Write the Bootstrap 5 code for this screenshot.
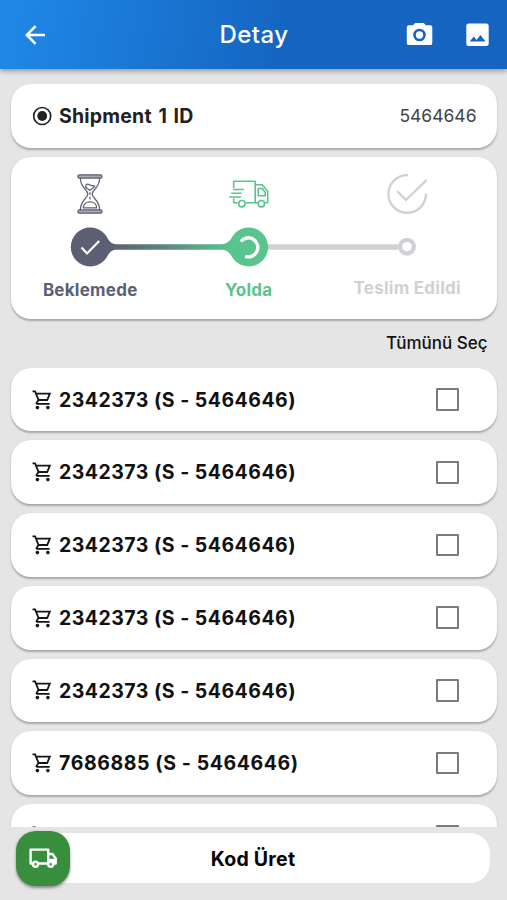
<!DOCTYPE html>
<html lang="tr">
<head>
<meta charset="utf-8">
<meta name="viewport" content="width=device-width, initial-scale=1">
<title>Detay</title>
<link href="https://cdn.jsdelivr.net/npm/bootstrap@5.3.0/dist/css/bootstrap.min.css" rel="stylesheet">
<style>
body{font-family:Inter,"Liberation Sans",sans-serif;background:#e5e5e5;height:900px;overflow:hidden;color:#111}
svg{display:block;flex:none}
.topbar{height:69px;background:linear-gradient(100deg,#2089e8 0%,#1566c2 55%,#1565c0 100%);box-shadow:0 2px 5px rgba(0,0,0,.36);z-index:2;padding:1px 17px 0 22px}
.page-title{font-size:24px;font-weight:500;letter-spacing:.4px;line-height:30px}
.side{width:84px}
.side-start{width:80px}
.content{padding:15.3px 10.5px 0 11px;min-height:0}
.tile{background:#fff;border-radius:20px;box-shadow:0 1.5px 2px rgba(0,0,0,.27);height:63.7px;flex:none;padding:0 20px 0 20px}
.ship-name{font-size:19.5px;font-weight:700;letter-spacing:.2px;word-spacing:1.8px;color:#222;margin-left:6px}
.ship-id{font-size:17.5px;letter-spacing:0;color:#444}
.steps{height:162px;padding:17px 10px 0 0;margin-top:8.800px}
.step-icon{height:40px}
.rail{margin-top:13px}
.step-label{font-size:17px;font-weight:700;letter-spacing:.25px;line-height:24px;padding-top:11px}
.tone-done{color:#5c5f73}.tone-now{color:#59c48d}.tone-next{color:#d0d1d4}
.select-all{font-size:17px;font-weight:500;line-height:24px;margin:12px 9px 13px 0}
.orders{gap:9px}
.order-no{font-size:19.5px;font-weight:700;letter-spacing:.48px;margin-left:6px;padding-top:1.500px}
.order-wide{letter-spacing:.59px}
.tickbox{width:22.5px;height:22.5px;border:2.3px solid #7b7b7b;border-radius:1px;margin-right:18px}
.bottom{height:73px;padding:6px 17px 17px 16px}
.code-btn,.code-btn:hover{background:#fff;border:0;border-radius:20px;font-size:19.5px;font-weight:700;color:#050505;letter-spacing:.25px}
.fab{width:54.5px;height:54.5px;left:15.5px;top:4px;border:0;border-radius:20px;background:#388e3c;box-shadow:0 1.5px 3px rgba(0,0,0,.4)}
</style>
</head>
<body class="d-flex flex-column">
<svg width="0" height="0" class="position-absolute" aria-hidden="true">
  <symbol id="cart" viewBox="0 0 20 20"><g fill="none" stroke="#151515" stroke-width="1.800"><path d="M.5 1.400h2.600l3.400 8.600-1.900 2.900q-.4 1 .6 1h12.400M4.200 3.700h13.600l-2.600 6.300H6.500"/></g><circle cx="5.400" cy="17.600" r="1.800" fill="#151515"/><circle cx="15.900" cy="17.600" r="1.800" fill="#151515"/></symbol>
</svg>

<header class="topbar d-flex align-items-center justify-content-between text-white flex-shrink-0 position-relative">
  <div class="side-start"><svg width="26" height="26" viewBox="0 0 26 26" fill="none" stroke="#fff" stroke-width="2.500"><path d="M23 13H5M13.600 4.200 4.800 13l8.800 8.800"/></svg></div>
  <h1 class="page-title m-0">Detay</h1>
  <div class="side d-flex justify-content-between align-items-center">
    <svg width="27" height="24" viewBox="0 0 27 24"><path fill="#fff" d="M9.200 0h8.500l2.200 2.200h4.200a2.200 2.200 0 0 1 2.200 2.200v15.500a2.200 2.200 0 0 1-2.200 2.200H3a2.200 2.200 0 0 1-2.200-2.200v-15.500A2.200 2.200 0 0 1 3 2.200h4z"/><circle cx="13.500" cy="12" r="5" fill="none" stroke="#1565c0" stroke-width="2.600"/></svg>
    <svg width="25" height="24" viewBox="0 0 25 24"><rect x="1.300" y=".6" width="22.400" height="22.400" rx="2.500" fill="#fff"/><path fill="#1565c0" d="m4.700 18.600 4.100-5 2.800 3.300 3.900-5 5 6.700z"/></svg>
  </div>
</header>

<main class="content flex-grow-1 overflow-hidden d-flex flex-column">
  <section class="tile d-flex align-items-center">
    <svg width="22" height="22" viewBox="0 0 22 22"><circle cx="11.200" cy="11" r="8.500" fill="none" stroke="#222" stroke-width="1.700"/><circle cx="11.200" cy="11" r="4.900" fill="#222"/></svg>
    <span class="ship-name">Shipment 1 ID</span>
    <span class="ship-id ms-auto">5464646</span>
  </section>

  <section class="tile steps">
    <div class="row g-0">
      <div class="col-4 d-flex justify-content-center align-items-center step-icon">
        <svg width="26" height="40" viewBox="0 0 26 40" fill="none" stroke="#5c5f73" stroke-width="1.200" stroke-linecap="round" stroke-linejoin="round">
          <rect x=".9" y=".8" width="24.200" height="3.400" rx="1.700" fill="#a6a8b2"/><rect x=".9" y="35.800" width="24.200" height="3.400" rx="1.700" fill="#a6a8b2"/>
          <path d="M3.400 4.300C3.400 14 10.800 15.500 10.800 20S3.400 26 3.400 35.700M22.600 4.300c0 9.700-7.400 11.200-7.400 15.700s7.400 6 7.400 15.700"/>
          <path d="M8.500 13c0-2.500 1.800-3.800 4-2.200 1.800 1.200 2.900.6 5.300 1.200-1.200 2.500-3.900 3-4.900 4.500-1.300-1.500-3-2-4.400-3.500z"/>
          <path d="M13 18.500v2M13 23v2M6.300 33.800c.4-8 13-8 13.400 0z"/>
        </svg>
      </div>
      <div class="col-4 d-flex justify-content-center align-items-center step-icon">
        <svg width="40" height="28" viewBox="0 0 40 28" fill="none" stroke="#59c48d" stroke-width="1.600" stroke-linejoin="round">
          <path d="M4.700 8V1.200h21.500V22.700H17M26.200 4.800h7l5.500 6.500v11.400h-2.500M29 22.700h-2.800M29.200 8.500h4l3 3.800v3.500h-7zM4 9.500h10.800M2.300 13.200h10.200M.4 17h11.500M4.700 18.500v4.200h4"/>
          <circle cx="12.900" cy="23.700" r="3.200"/><circle cx="32.400" cy="23.700" r="3.200"/>
        </svg>
      </div>
      <div class="col-4 d-flex justify-content-center align-items-center step-icon">
        <svg width="42" height="42" viewBox="0 0 42 42" fill="none" stroke="#d0d1d4" stroke-width="2.300"><path d="M22.200 2.200A18.800 18.800 0 1 0 40 20.500M11 18l9 9L40.500 7.200"/></svg>
      </div>
    </div>
    <svg class="rail" width="475.500" height="40" viewBox="0 0 475.500 40">
      <defs><linearGradient id="leg" gradientUnits="userSpaceOnUse" x1="98" x2="218"><stop stop-color="#5c5f73"/><stop offset=".45" stop-color="#5b857f"/><stop offset="1" stop-color="#59c48d"/></linearGradient></defs>
      <path d="M237 20h150" stroke="#d0d1d4" stroke-width="5.500"/>
      <path d="M92 6C98 12 98 17.200 106 17.200H210C218 17.200 219 12 226 6V34C219 28 218 22.800 210 22.800H106C98 22.800 98 28 92 34Z" fill="url(#leg)"/>
      <circle cx="79.200" cy="20" r="19.400" fill="#5c5f73"/><path d="m70.500 20.500 5.500 6L88.200 14" fill="none" stroke="#fff" stroke-width="2.200"/>
      <circle cx="237.700" cy="20" r="19.400" fill="#59c48d"/><path d="M229.800 14.500A9.500 9.500 0 1 1 234.200 29.300" fill="none" stroke="#fff" stroke-width="3.400"/>
      <circle cx="396" cy="19.700" r="6.900" fill="#fff" stroke="#d0d1d4" stroke-width="4.200"/>
    </svg>
    <div class="row g-0 text-center step-label">
      <div class="col-4 tone-done">Beklemede</div>
      <div class="col-4 tone-now">Yolda</div>
      <div class="col-4 tone-next lh-sm">Teslim Edildi</div>
    </div>
  </section>

  <div class="select-all text-end">Tümünü Seç</div>

  <div class="orders d-flex flex-column">
    <div class="tile d-flex align-items-center"><svg width="22" height="20"><use href="#cart"/></svg><span class="order-no">2342373 (S - 5464646)</span><span class="tickbox ms-auto"></span></div>
    <div class="tile d-flex align-items-center"><svg width="22" height="20"><use href="#cart"/></svg><span class="order-no">2342373 (S - 5464646)</span><span class="tickbox ms-auto"></span></div>
    <div class="tile d-flex align-items-center"><svg width="22" height="20"><use href="#cart"/></svg><span class="order-no">2342373 (S - 5464646)</span><span class="tickbox ms-auto"></span></div>
    <div class="tile d-flex align-items-center"><svg width="22" height="20"><use href="#cart"/></svg><span class="order-no">2342373 (S - 5464646)</span><span class="tickbox ms-auto"></span></div>
    <div class="tile d-flex align-items-center"><svg width="22" height="20"><use href="#cart"/></svg><span class="order-no">2342373 (S - 5464646)</span><span class="tickbox ms-auto"></span></div>
    <div class="tile d-flex align-items-center"><svg width="22" height="20"><use href="#cart"/></svg><span class="order-no order-wide">7686885 (S - 5464646)</span><span class="tickbox ms-auto"></span></div>
    <div class="tile d-flex align-items-center"><svg width="22" height="20"><use href="#cart"/></svg><span class="tickbox ms-auto"></span></div>
  </div>
</main>

<footer class="bottom position-relative flex-shrink-0">
  <button class="btn code-btn w-100 h-100 p-0 pt-1">Kod Üret</button>
  <button class="fab position-absolute d-flex align-items-center justify-content-center p-0" aria-label="Kargo">
    <svg width="28" height="22" viewBox="0 0 28 22" fill="none" stroke="#fff" stroke-width="2.400" stroke-linejoin="round"><path d="M4 16.500H1.600V2.600h17.600V16.500H9M19.200 7h4.200l3.300 4.500v5H25"/><path d="M20 11.800h7v4.700H20z" fill="#fff" stroke="none"/><circle cx="6.500" cy="17.300" r="2.500" fill="#388e3c"/><circle cx="21.700" cy="17.300" r="2.500" fill="#388e3c"/></svg>
  </button>
</footer>
<script src="https://cdn.jsdelivr.net/npm/bootstrap@5.3.0/dist/js/bootstrap.bundle.min.js"></script>
</body>
</html>
